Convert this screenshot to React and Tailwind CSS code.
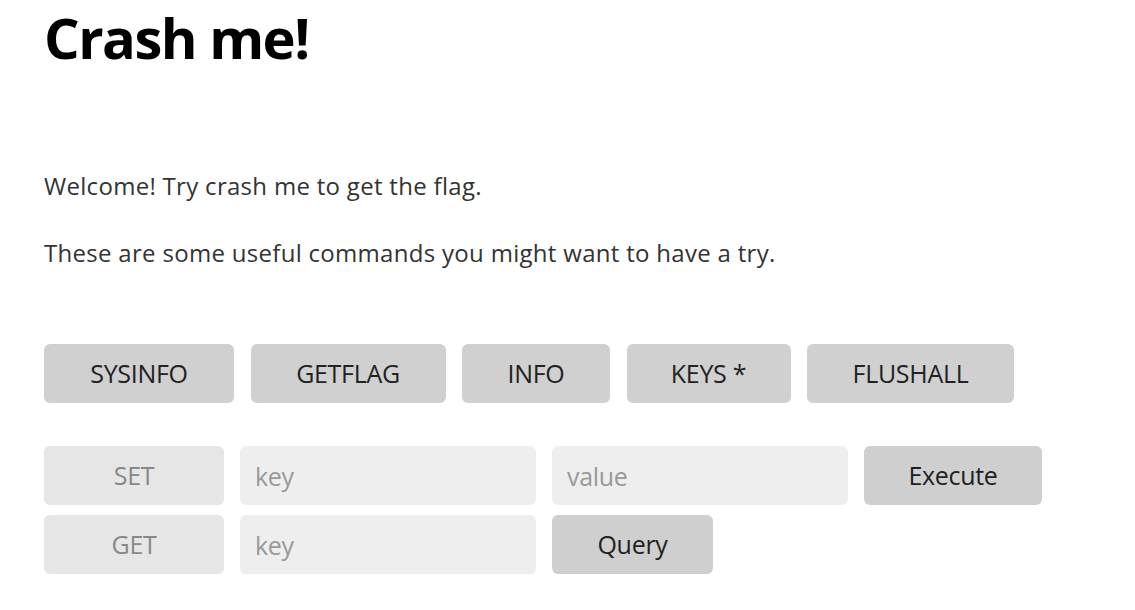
export default function App() {
  const font = { fontFamily: '"Open Sans", "Noto Sans", sans-serif' };
  const cmds = [
    ["SYSINFO", "w-[190px]"],
    ["GETFLAG", "w-[195px]"],
    ["INFO", "w-[148px]"],
    ["KEYS *", "w-[164px]"],
    ["FLUSHALL", "w-[207px]"],
  ];
  return (
    <div className="min-h-[610px] w-[1135px] bg-white pl-[44px]" style={font}>
      <h1 className="pt-0 text-[56px] font-bold leading-[74px] text-black tracking-[-1.5px]">Crash me!</h1>
      <p className="mt-[96px] text-[24px] leading-[32px] text-[#333] tracking-[0.3px]">Welcome! Try crash me to get the flag.</p>
      <p className="mt-[35px] text-[24px] leading-[32px] text-[#333] tracking-[0.3px]">These are some useful commands you might want to have a try.</p>
      <div className="mt-[75px] flex gap-[16.5px]">
        {cmds.map(([t, w]) => (
          <button key={t} className={`${w} h-[59px] rounded-[6px] bg-[#d0d0d0] text-[25px] text-[#222] tracking-[-0.3px]`}>{t}</button>
        ))}
      </div>
      <div className="mt-[43px] flex flex-col gap-[10px]">
        <div className="flex gap-[16px]">
          <div className="flex h-[59px] w-[180px] items-center justify-center rounded-[6px] bg-[#e6e6e6] text-[25px] text-[#888] tracking-[-0.3px]">SET</div>
          <input placeholder="key" className="h-[59px] w-[296px] rounded-[6px] bg-[#eeeeee] px-[15px] text-[25px] tracking-[-0.3px] outline-none placeholder:text-[#999]" />
          <input placeholder="value" className="h-[59px] w-[296px] rounded-[6px] bg-[#eeeeee] px-[15px] text-[25px] tracking-[-0.3px] outline-none placeholder:text-[#999]" />
          <button className="h-[59px] w-[178px] rounded-[6px] bg-[#cfcfcf] text-[25px] text-[#222] tracking-[-0.3px]">Execute</button>
        </div>
        <div className="flex gap-[16px]">
          <div className="flex h-[59px] w-[180px] items-center justify-center rounded-[6px] bg-[#e6e6e6] text-[25px] text-[#888] tracking-[-0.3px]">GET</div>
          <input placeholder="key" className="h-[59px] w-[296px] rounded-[6px] bg-[#eeeeee] px-[15px] text-[25px] tracking-[-0.3px] outline-none placeholder:text-[#999]" />
          <button className="h-[59px] w-[161px] rounded-[6px] bg-[#cfcfcf] text-[25px] text-[#222] tracking-[-0.3px]">Query</button>
        </div>
      </div>
    </div>
  );
}
